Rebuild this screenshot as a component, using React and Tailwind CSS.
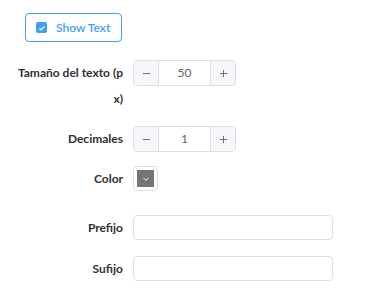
import { useState } from 'react'

function NumberInput({ value }) {
  return (
    <div className="flex h-[26px] w-[103px] rounded-[4px] border border-[#dcdfe6] overflow-hidden text-[12px] text-[#606266]">
      <button className="w-[25px] flex items-center justify-center bg-[#f5f7fa] border-r border-[#dcdfe6] text-[#606266]">
        <svg width="9" height="9" viewBox="0 0 10 10"><path d="M1 5h8" stroke="currentColor" strokeWidth="1" /></svg>
      </button>
      <div className="flex-1 flex items-center justify-center bg-white">{value}</div>
      <button className="w-[25px] flex items-center justify-center bg-[#f5f7fa] border-l border-[#dcdfe6] text-[#606266]">
        <svg width="9" height="9" viewBox="0 0 10 10"><path d="M1 5h8M5 1v8" stroke="currentColor" strokeWidth="1" /></svg>
      </button>
    </div>
  )
}

function Row({ label, children, className = '' }) {
  return (
    <div className={'flex ' + className}>
      <label className="w-[133px] shrink-0 pl-[8px] pr-[10px] text-right whitespace-nowrap font-bold text-[12px] leading-[26px] text-[#303133]">
        {label}
      </label>
      {children}
    </div>
  )
}

export default function App() {
  const [checked, setChecked] = useState(true)

  return (
    <main className="w-[387px] h-[301px] bg-white" style={{ fontFamily: 'Lato, sans-serif' }}>
      <div className="pt-[13px] pl-[25px]">
        <button
          onClick={() => setChecked(!checked)}
          className="flex items-center h-[29px] w-[97px] rounded-[4px] border border-[#409eff] pl-[10px]"
        >
          <span className="w-[11px] h-[11px] rounded-[2px] bg-[#409eff] flex items-center justify-center">
            {checked && (
              <svg width="8" height="8" viewBox="0 0 8 8"><path d="M1.5 4.2l1.7 1.6 3.3-3.4" fill="none" stroke="white" strokeWidth="1.2" /></svg>
            )}
          </span>
          <span className="ml-[9px] text-[12px] font-semibold text-[#409eff]">Show Text</span>
        </button>
      </div>

      <Row label={<>Tamaño del texto (p<br />x)</>} className="mt-[18px]">
        <NumberInput value={50} />
      </Row>

      <Row label="Decimales" className="mt-[14px]">
        <NumberInput value={1} />
      </Row>

      <Row label="Color" className="mt-[14px]">
        <div className="w-[25px] h-[25px] rounded-[4px] border border-[#dcdfe6] p-[3px]">
          <div className="w-full h-full bg-[#757575] flex items-center justify-center">
            <svg width="8" height="8" viewBox="0 0 8 8"><path d="M1.5 3l2.5 2.5L6.5 3" fill="none" stroke="white" strokeWidth="1" /></svg>
          </div>
        </div>
      </Row>

      <Row label="Prefijo" className="mt-[23px]">
        <input className="w-[200px] h-[25px] rounded-[4px] border border-[#dcdfe6] outline-none px-2 text-[12px]" />
      </Row>

      <Row label="Sufijo" className="mt-[15px]">
        <input className="w-[200px] h-[25px] rounded-[4px] border border-[#dcdfe6] outline-none px-2 text-[12px]" />
      </Row>
    </main>
  )
}
